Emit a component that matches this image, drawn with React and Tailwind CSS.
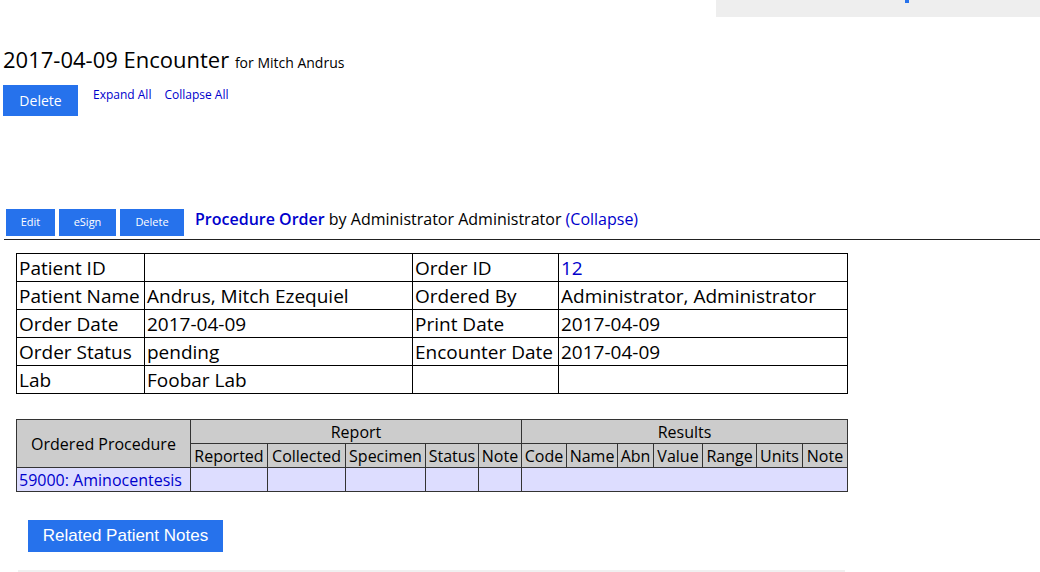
export default function App() {
  const orderRows = [
    ['Patient ID', '', 'Order ID', '12'],
    ['Patient Name', 'Andrus, Mitch Ezequiel', 'Ordered By', 'Administrator, Administrator'],
    ['Order Date', '2017-04-09', 'Print Date', '2017-04-09'],
    ['Order Status', 'pending', 'Encounter Date', '2017-04-09'],
    ['Lab', 'Foobar Lab', '', ''],
  ];

  const reportCols = [
    ['Reported', 77],
    ['Collected', 78],
    ['Specimen', 80],
    ['Status', 53],
    ['Note', 43],
  ];
  const resultCols = [
    ['Code', 45],
    ['Name', 51],
    ['Abn', 36],
    ['Value', 49],
    ['Range', 54],
    ['Units', 46],
    ['Note', 45],
  ];

  return (
    <div className="relative w-[1040px] h-[572px] overflow-hidden bg-white text-black" style={{ fontFamily: '"Open Sans", "DejaVu Sans", sans-serif' }}>
      {/* top bar remnant */}
      <div className="flex justify-end">
        <div className="w-[324px] h-[17px] bg-[#eeeeee] relative">
          <span className="absolute left-[189px] top-0 w-[4px] h-[3px] bg-[#2672ec]"></span>
        </div>
      </div>

      <div className="pl-[3px] pt-[28px]">
        <h1 className="text-[22px] leading-[28px]">
          2017-04-09 Encounter <span className="text-[14px]">for Mitch Andrus</span>
        </h1>
        <div className="flex items-start mt-[8px]">
          <button className="w-[75px] h-[31px] bg-[#2672ec] text-white text-[14px]">Delete</button>
          <a className="ml-[15px] mt-[1px] text-[12px] text-[#0000cc]">Expand All</a>
          <a className="ml-[13px] mt-[1px] text-[12px] text-[#0000cc]">Collapse All</a>
        </div>
      </div>

      <div className="mt-[93px] pl-[6px] flex items-center">
        <button className="w-[49px] h-[27px] bg-[#2672ec] text-white text-[11px]">Edit</button>
        <button className="ml-[4px] w-[57px] h-[27px] bg-[#2672ec] text-white text-[11px]">eSign</button>
        <button className="ml-[4px] w-[64px] h-[27px] bg-[#2672ec] text-white text-[11px]">Delete</button>
        <div className="ml-[11px] text-[16px] -mt-[8px]">
          <span className="text-[#0000cc] font-semibold">Procedure Order</span> by Administrator Administrator{' '}
          <span className="text-[#0000cc]">(Collapse)</span>
        </div>
      </div>
      <div className="ml-[4px] mt-[3px] h-px bg-[#222222]"></div>

      <div className="pl-[16px] mt-[13px]">
        <table className="table-fixed border-collapse text-[19px] leading-[26px]">
          <colgroup>
            <col className="w-[128px]" />
            <col className="w-[268px]" />
            <col className="w-[146px]" />
            <col className="w-[289px]" />
          </colgroup>
          <tbody>
            {orderRows.map((r, i) => (
              <tr key={i} className="h-[28px]">
                {r.map((c, j) => (
                  <td key={j} className={`border border-black px-[2px] py-0 whitespace-nowrap overflow-hidden ${i === 0 && j === 3 ? 'text-[#0000cc]' : ''}`}>
                    {c}
                  </td>
                ))}
              </tr>
            ))}
          </tbody>
        </table>
      </div>

      <div className="pl-[16px] mt-[25px]">
        <table className="table-fixed border-collapse text-[16px] leading-[22px]">
          <colgroup>
            <col className="w-[174px]" />
            {reportCols.map(([n, w], i) => (
              <col key={'r' + i} style={{ width: w }} />
            ))}
            {resultCols.map(([n, w], i) => (
              <col key={'s' + i} style={{ width: w }} />
            ))}
          </colgroup>
          <thead>
            <tr className="h-[24px] bg-[#cccccc]">
              <th rowSpan={2} className="border border-[#333333] font-normal">Ordered Procedure</th>
              <th colSpan={5} className="border border-[#333333] font-normal">Report</th>
              <th colSpan={7} className="border border-[#333333] font-normal">Results</th>
            </tr>
            <tr className="h-[24px] bg-[#cccccc]">
              {reportCols.map(([n], i) => (
                <th key={'r' + i} className="border border-[#333333] font-normal px-0 whitespace-nowrap">{n}</th>
              ))}
              {resultCols.map(([n], i) => (
                <th key={'s' + i} className="border border-[#333333] font-normal px-0 whitespace-nowrap">{n}</th>
              ))}
            </tr>
          </thead>
          <tbody>
            <tr className="h-[24px] bg-[#ddddff]">
              <td className="border border-[#333333] px-[2px] text-[#0000cc] whitespace-nowrap">59000: Aminocentesis</td>
              {reportCols.map((c, i) => (
                <td key={i} className="border border-[#333333]"></td>
              ))}
              <td colSpan={7} className="border border-[#333333]"></td>
            </tr>
          </tbody>
        </table>
      </div>

      <div className="pl-[28px] mt-[28px]">
        <button className="w-[195px] h-[32px] bg-[#2672ec] text-white text-[17px]" style={{ fontFamily: '"Liberation Sans", Arial, sans-serif' }}>
          Related Patient Notes
        </button>
      </div>
      <div className="ml-[18px] w-[827px] mt-[18px] h-[4px] bg-[#f0f0f0]"></div>
    </div>
  );
}
